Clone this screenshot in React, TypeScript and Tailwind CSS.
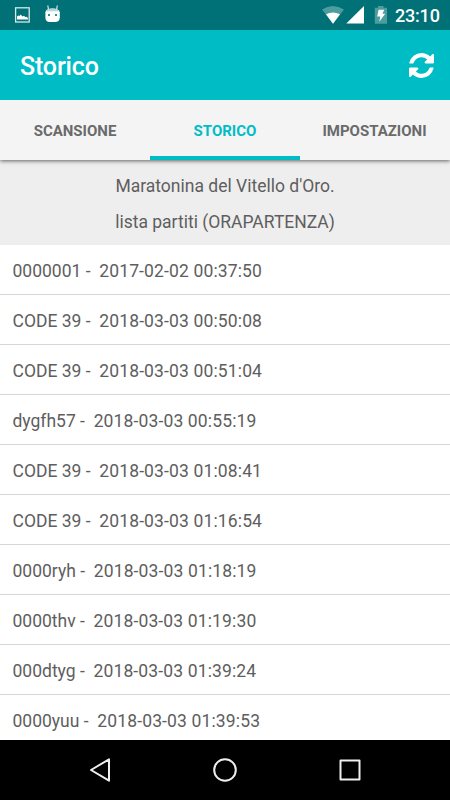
const rows: [string, string][] = [
  ['0000001', '2017-02-02 00:37:50'],
  ['CODE 39', '2018-03-03 00:50:08'],
  ['CODE 39', '2018-03-03 00:51:04'],
  ['dygfh57', '2018-03-03 00:55:19'],
  ['CODE 39', '2018-03-03 01:08:41'],
  ['CODE 39', '2018-03-03 01:16:54'],
  ['0000ryh', '2018-03-03 01:18:19'],
  ['0000thv', '2018-03-03 01:19:30'],
  ['000dtyg', '2018-03-03 01:39:24'],
  ['0000yuu', '2018-03-03 01:39:53'],
];

function StatusBar() {
  return (
    <div className="flex h-[30px] shrink-0 items-center justify-between bg-[#007176] text-white">
      <svg className="h-[30px] w-[70px]" viewBox="0 0 70 30">
        <rect x="15.6" y="7.8" width="13.6" height="14.2" fill="none" stroke="#d6e8e9" strokeWidth="1.3" />
        <path d="M17 19.6V16.5L18.2 15.4L19.4 15.9L20.6 14.6L22.6 16.4L24 15.8L25.2 16.9L26.5 16.7L27.9 18V19.6Z" fill="#fff" />
        <path d="M45.4 12.2Q46 8.6 52.5 8.6Q59 8.6 59.8 12.2V17.5Q59.6 22 55 22H50Q45.4 22 45.4 17.5Z" fill="#fff" />
        <path d="M46.2 11.2Q47.5 8.6 52.5 8.6Q57.8 8.6 59 11.2Z" fill="#b5d6d8" />
        <path d="M48.5 9.5L47.8 5.5M56.6 9.5L57.3 5.5" stroke="#d6e8e9" strokeWidth="1.2" />
        <rect x="48" y="14" width="2" height="2" fill="#338d91" />
        <rect x="55" y="14" width="2" height="2" fill="#338d91" />
      </svg>
      <div className="flex items-center">
        <svg className="h-[30px] w-[80px]" viewBox="315 0 80 30">
          <path d="M322 9.4Q332.9 2.4 344 9.4L333 23.8Z" fill="#4d9c9f" />
          <path d="M326 14.3Q333 10.5 340 14.3L333 23.8Z" fill="#fff" />
          <path d="M346.3 23.5L364 6V23.5Z" fill="#fff" />
          <path d="M374.8 7.8H378V6H383.5V7.8H387V23.8H374.8Z" fill="#4d9c9f" />
          <path d="M378.6 9.8H384.2L382.5 13.7H385.2L379.3 21.7L380.3 16.4H377.2Z" fill="#fff" />
        </svg>
        <span className="w-[55px] pt-[2px] text-[18px] leading-[30px] font-medium tracking-[-0.2px]">23:10</span>
      </div>
    </div>
  );
}

export default function App() {
  return (
    <div className="flex h-[800px] w-[450px] flex-col overflow-hidden bg-white font-['Roboto',sans-serif] text-[#5e5e5e]">
      <StatusBar />
      <header className="relative z-20 flex h-[70px] shrink-0 items-center justify-between bg-[#00bdc5] pr-4 pl-5 text-white">
        <h1 className="pt-[4px] text-[25px] leading-8 font-medium tracking-[-0.15px]">Storico</h1>
        <svg className="h-[25px] w-[25px]" viewBox="0 0 1536 1536" fill="currentColor">
          <path d="M1511 928q0 5-1 7-64 268-268 434.5t-478 166.5q-146 0-282.5-55t-243.5-157l-129 129q-19 19-45 19t-45-19-19-45v-448q0-26 19-45t45-19h448q26 0 45 19t19 45-19 45l-137 137q71 66 161 102t187 36q134 0 250-65t186-179q11-17 53-117 8-23 30-23h192q13 0 22.5 9.5t9.5 22.5zm25-800v448q0 26-19 45t-45 19h-448q-26 0-45-19t-19-45 19-45l138-138q-148-137-349-137-134 0-250 65t-186 179q-11 17-53 117-8 23-30 23h-199q-13 0-22.5-9.5t-9.5-22.5v-7q65-268 270-434.5t480-166.5q146 0 284 55.5t245 156.5l130-129q19-19 45-19t45 19 19 45z" />
        </svg>
      </header>
      <nav className="relative z-10 grid h-[60px] shrink-0 grid-cols-3 bg-[#f4f4f4] text-center text-[15px] leading-[62px] font-bold text-[#6a6a6a] shadow-[0_1px_4px_rgba(0,0,0,0.6)]">
        <div>SCANSIONE</div>
        <div className="h-[60px] border-b-4 border-[#00bdc5] text-[#00bdc5]">STORICO</div>
        <div className="pr-px">IMPOSTAZIONI</div>
      </nav>
      <section className="h-[85px] shrink-0 bg-[#eee] pt-[8px] text-center text-[17.5px] leading-9">
        <p>Maratonina del Vitello d'Oro.</p>
        <p>lista partiti (ORAPARTENZA)</p>
      </section>
      <main className="h-[495px] shrink-0 overflow-hidden">
        {rows.map(([code, time], i) => (
          <div key={i} className="h-[50px] border-b border-[#d6d6d6] pl-[12.5px] text-[17.5px] leading-[52px] whitespace-pre">
            {`${code} -  `}
            <span className="tracking-[0.14px]">{time}</span>
          </div>
        ))}
      </main>
      <footer className="flex h-[60px] shrink-0 items-center bg-black">
        <svg className="h-[60px] w-[450px]" viewBox="0 0 450 60" fill="none" stroke="#eee" strokeWidth="2" strokeLinejoin="round">
          <path d="M91 30L109 19.3V40.7Z" />
          <circle cx="225" cy="30" r="10.8" />
          <rect x="340.5" y="20.5" width="19" height="19" />
        </svg>
      </footer>
    </div>
  );
}
